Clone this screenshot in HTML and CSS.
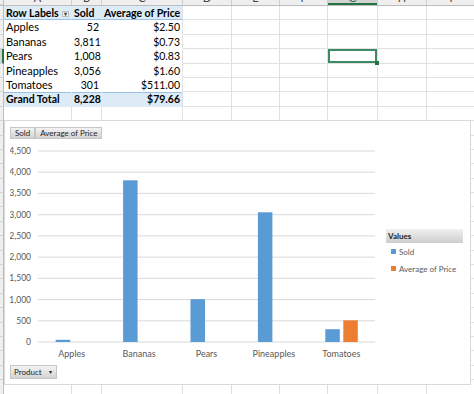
FILE: index.html
```html
<!DOCTYPE html>
<html lang="en">
<head>
    <meta charset="UTF-8">
    <meta name="viewport" content="width=device-width, initial-scale=1.0">
    <title>PivotChart</title>
    <link rel="stylesheet" href="styles.css">
</head>
<body>
    <div class="sheet" id="sheet">
        <div class="row col-heads">
            <div class="rh"></div>
            <div class="ch">A</div><div class="ch">B</div><div class="ch">C</div><div class="ch">D</div><div class="ch">E</div>
            <div class="ch">F</div><div class="ch selected">G</div><div class="ch">H</div><div class="ch">I</div>
        </div>
        <div class="row pivot-head">
            <div class="rh"></div>
            <div class="c p">Row Labels<span class="dd">▾</span></div>
            <div class="c p">Sold</div>
            <div class="c p end">Average of Price</div>
            <div class="c"></div><div class="c"></div><div class="c"></div><div class="c"></div><div class="c"></div><div class="c"></div>
        </div>
        <div class="row">
            <div class="rh"></div>
            <div class="c p lbl">Apples</div>
            <div class="c p num">52</div>
            <div class="c p end num">$2.50</div>
            <div class="c"></div><div class="c"></div><div class="c"></div><div class="c"></div><div class="c"></div><div class="c"></div>
        </div>
        <div class="row">
            <div class="rh"></div>
            <div class="c p lbl">Bananas</div>
            <div class="c p num">3,811</div>
            <div class="c p end num">$0.73</div>
            <div class="c"></div><div class="c"></div><div class="c"></div><div class="c"></div><div class="c"></div><div class="c"></div>
        </div>
        <div class="row">
            <div class="rh sel-row"></div>
            <div class="c p lbl">Pears</div>
            <div class="c p num">1,008</div>
            <div class="c p end num">$0.83</div>
            <div class="c"></div><div class="c"></div><div class="c"></div><div class="c sel"></div><div class="c"></div><div class="c"></div>
        </div>
        <div class="row">
            <div class="rh"></div>
            <div class="c p lbl">Pineapples</div>
            <div class="c p num">3,056</div>
            <div class="c p end num">$1.60</div>
            <div class="c"></div><div class="c"></div><div class="c"></div><div class="c"></div><div class="c"></div><div class="c"></div>
        </div>
        <div class="row">
            <div class="rh"></div>
            <div class="c p lbl">Tomatoes</div>
            <div class="c p num">301</div>
            <div class="c p end num">$511.00</div>
            <div class="c"></div><div class="c"></div><div class="c"></div><div class="c"></div><div class="c"></div><div class="c"></div>
        </div>
        <div class="row pivot-total">
            <div class="rh"></div>
            <div class="c p">Grand Total</div>
            <div class="c p num">8,228</div>
            <div class="c p end num">$79.66</div>
            <div class="c"></div><div class="c"></div><div class="c"></div><div class="c"></div><div class="c"></div><div class="c"></div>
        </div>
    </div>

    <!-- pivot chart floating over the sheet -->
    <div class="chart">
        <div class="field-buttons">
            <div class="fbtn">Sold</div>
            <div class="fbtn">Average of Price</div>
        </div>
        <div class="chart-body">
            <svg class="plot" width="370" height="222" viewBox="0 0 370 222">
                <g class="grid">
                    <line x1="28" y1="12" x2="365" y2="12"/>
                    <line x1="28" y1="33.2" x2="365" y2="33.2"/>
                    <line x1="28" y1="54.4" x2="365" y2="54.4"/>
                    <line x1="28" y1="75.7" x2="365" y2="75.7"/>
                    <line x1="28" y1="96.9" x2="365" y2="96.9"/>
                    <line x1="28" y1="118.1" x2="365" y2="118.1"/>
                    <line x1="28" y1="139.3" x2="365" y2="139.3"/>
                    <line x1="28" y1="160.6" x2="365" y2="160.6"/>
                    <line x1="28" y1="181.8" x2="365" y2="181.8"/>
                    <line x1="28" y1="203" x2="365" y2="203"/>
                </g>
                <g class="y-labels">
                    <text x="21" y="15">4,500</text>
                    <text x="21" y="36.2">4,000</text>
                    <text x="21" y="57.4">3,500</text>
                    <text x="21" y="78.7">3,000</text>
                    <text x="21" y="99.9">2,500</text>
                    <text x="21" y="121.1">2,000</text>
                    <text x="21" y="142.3">1,500</text>
                    <text x="21" y="163.6">1,000</text>
                    <text x="21" y="184.8">500</text>
                    <text x="21" y="206">0</text>
                </g>
                <g class="bars">
                    <rect class="sold" x="45.7" y="200.8" width="14.5" height="2.2"/>
                    <rect class="sold" x="113.1" y="41.3" width="14.5" height="161.7"/>
                    <rect class="sold" x="180.5" y="160.2" width="14.5" height="42.8"/>
                    <rect class="sold" x="247.9" y="73.3" width="14.5" height="129.7"/>
                    <rect class="sold" x="315.3" y="190.2" width="14.5" height="12.8"/>
                    <rect class="price" x="333.3" y="181.3" width="14.5" height="21.7"/>
                </g>
                <g class="x-labels">
                    <text x="61.7" y="218">Apples</text>
                    <text x="129.1" y="218">Bananas</text>
                    <text x="196.5" y="218">Pears</text>
                    <text x="263.9" y="218">Pineapples</text>
                    <text x="331.3" y="218">Tomatoes</text>
                </g>
            </svg>
            <div class="legend">
                <div class="legend-title">Values</div>
                <div class="legend-item"><span class="swatch sold-bg"></span>Sold</div>
                <div class="legend-item"><span class="swatch price-bg"></span>Average of Price</div>
            </div>
        </div>
        <div class="fbtn product">Product<span class="arrow">▾</span></div>
    </div>

    <script>
        // empty rows below the pivot table
        const sheet = document.getElementById('sheet');
        for (let r = 0; r < 21; r++) {
            const row = document.createElement('div');
            row.className = 'row';
            row.innerHTML = '<div class="rh"></div>' + '<div class="c"></div>'.repeat(9);
            sheet.appendChild(row);
        }
    </script>
</body>
</html>
```

FILE: styles.css
```css
* {
    box-sizing: border-box;
}
body {
    margin: 0;
    font-family: Lato, "Liberation Sans", sans-serif;
    background-color: #fff;
    overflow: hidden;
}
.sheet {
    margin-top: -12px;
}
.row {
    display: grid;
    grid-template-columns: 4px 68px 30px 81px 49px 48px 48px 50px 49px 49px;
    height: 14.4px;
}
.rh {
    background-color: #efefef;
    border-right: 1px solid #bdbdbd;
    border-bottom: 1px solid #d4d4d4;
}
.rh.sel-row {
    background-color: #d2d2d2;
    border-right: 2px solid #217346;
}
.col-heads {
    height: 18px;
    background-color: #efefef;
    border-bottom: 1px solid #bdbdbd;
}
.ch {
    display: flex;
    align-items: flex-end;
    justify-content: center;
    padding-bottom: 2px;
    font-size: 11px;
    line-height: 10px;
    color: #444;
    border-right: 1px solid #d0d0d0;
}
.ch.selected {
    background-color: #d2d2d2;
    color: #217346;
    box-shadow: inset 0 -2px #217346;
}
.c {
    border-right: 1px solid #e1e1e1;
    border-bottom: 1px solid #e1e1e1;
    font-size: 10.5px;
    line-height: 14px;
    padding: 0 2px;
    white-space: nowrap;
    overflow: hidden;
    color: #000;
}
.c.lbl {
    font-size: 11px;
}
.c.p {
    border-right-color: transparent;
    border-bottom-color: transparent;
}
.c.p.end {
    border-right-color: #e1e1e1;
}
.num {
    text-align: right;
}
.pivot-head .p {
    background-color: #ddebf7;
    border-bottom: 1px solid #9bc2e6;
    font-weight: 700;
}
.pivot-total .p {
    background-color: #ddebf7;
    box-shadow: inset 0 1px #9bc2e6;
    font-weight: 700;
}
.dd {
    float: right;
    width: 7px;
    height: 6px;
    margin-top: 5px;
    border: 1px solid #bcbcbc;
    background-color: #f4f4f4;
    font-size: 6px;
    line-height: 4px;
    text-align: center;
    color: #444;
}
.c.sel {
    position: relative;
    overflow: visible;
    box-shadow: inset 0 0 0 2px #3d8a63;
}
.c.sel::after {
    content: "";
    position: absolute;
    right: -2px;
    bottom: -2px;
    width: 4px;
    height: 4px;
    background-color: #217346;
}

/* chart */
.chart {
    position: absolute;
    left: 4px;
    top: 120px;
    width: 467px;
    height: 265px;
    background-color: #fff;
    border: 1px solid #d9d9d9;
    padding: 6px 5px 0;
    color: #595959;
}
.field-buttons {
    display: flex;
    height: 12px;
}
.fbtn {
    height: 12px;
    font-size: 8px;
    line-height: 10px;
    padding: 0 4px;
    background: linear-gradient(#f3f3f3, #d3d3d3);
    border: 1px solid #c6c6c6;
    color: #262626;
    white-space: nowrap;
}
.chart-body {
    display: flex;
}
.plot {
    display: block;
}
.grid line {
    stroke: #d9d9d9;
    stroke-width: 1;
}
.y-labels text {
    font-size: 8.5px;
    fill: #595959;
    text-anchor: end;
}
.x-labels text {
    font-size: 9px;
    fill: #595959;
    text-anchor: middle;
}
.sold {
    fill: #5b9bd5;
}
.price {
    fill: #ed7d31;
}
.legend {
    margin-top: 90px;
    margin-left: 6px;
    width: 77px;
}
.legend-title {
    height: 14px;
    line-height: 14px;
    padding-left: 2px;
    font-size: 8px;
    font-weight: 700;
    color: #262626;
    background: linear-gradient(#f0f0f0, #cdcdcd);
}
.legend-item {
    display: flex;
    align-items: center;
    gap: 3px;
    height: 17px;
    padding-left: 5px;
    font-size: 8px;
    white-space: nowrap;
}
.swatch {
    width: 5px;
    height: 5px;
}
.sold-bg {
    background-color: #5b9bd5;
}
.price-bg {
    background-color: #ed7d31;
}
.product {
    display: flex;
    justify-content: space-between;
    align-items: center;
    width: 47px;
    height: 14px;
    margin-top: 4px;
    padding: 0 4px 0 3px;
}
.arrow {
    font-size: 6px;
}
```
